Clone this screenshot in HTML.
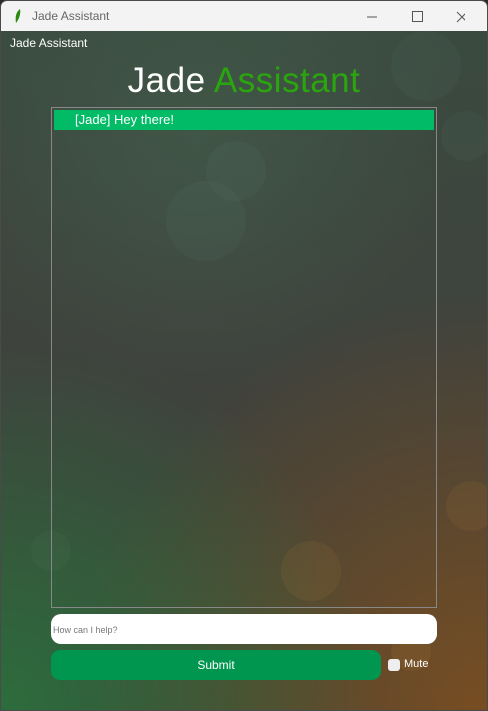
<!DOCTYPE html>
<html><head><style>
*{margin:0;padding:0;box-sizing:border-box}
body{width:488px;height:711px;overflow:hidden;background:#2b2b2b;font-family:"Liberation Sans",sans-serif}
.win{position:absolute;left:0;top:0;width:488px;height:711px;border-radius:7px 7px 0 0;overflow:hidden;border:1px solid #4a4a4a}
.tb{height:30px;background:#f3f3f3;position:relative;font-size:12px;color:#666}
.tb .t{position:absolute;left:31px;top:8px}
.app{position:absolute;top:30px;left:0;right:0;bottom:0;
background:
radial-gradient(circle at 0% 100%,rgba(40,120,60,.8),transparent 45%),
radial-gradient(circle at 100% 100%,rgba(130,80,30,.85),transparent 50%),
radial-gradient(circle at 40% 15%,rgba(70,100,80,.5),transparent 40%),
linear-gradient(#3a4a3f,#3f423d 50%,#3d403a)}
.b{position:absolute;border-radius:50%;background:rgba(120,160,140,.07)}
.lbl{position:absolute;left:9px;top:5px;color:#fff;font-size:12px}
h1{position:absolute;left:0;width:486px;top:30px;text-align:center;font-weight:normal;font-size:35px;color:#fff;letter-spacing:.5px}
h1 span{color:#2aa50e}
.list{position:absolute;left:50px;top:76px;width:386px;height:501px;border:1px solid #888}
.row{position:absolute;left:2px;top:2px;right:2px;height:20px;background:#02bb67;color:#fff;font-size:13px;padding:2px 0 0 21px}
.inp{position:absolute;left:50px;top:583px;width:386px;height:30px;background:#fff;border-radius:10px;font-size:9px;color:#777;padding:11px 2px}
.btn{position:absolute;left:50px;top:619px;width:330px;height:30px;background:#009650;border-radius:9px;color:#fff;font-size:12px;text-align:center;line-height:30px}
.cb{position:absolute;left:387px;top:628px;width:12px;height:12px;background:#eee;border-radius:3px}
.mute{position:absolute;left:403px;top:627px;color:#fff;font-size:11px}
</style></head><body>
<div class="win">
<div class="tb"><svg style="position:absolute;left:13px;top:7px" width="8" height="16"><path d="M6 1 C2 4 1 9 2 15 C5 11 7 6 6 1Z" fill="#2a8a10"/></svg><span class="t">Jade Assistant</span>
<svg style="position:absolute;left:364px;top:9px" width="100" height="14" stroke="#555" fill="none"><path d="M2 7h10"/><rect x="47.5" y="1.5" width="10" height="10"/><path d="M92 2l10 10M102 2l-10 10"/></svg></div>
<div class="app">
<div class="b" style="left:205px;top:110px;width:60px;height:60px"></div>
<div class="b" style="left:165px;top:150px;width:80px;height:80px"></div>
<div class="b" style="left:390px;top:0;width:70px;height:70px"></div>
<div class="b" style="left:440px;top:80px;width:50px;height:50px"></div>
<div class="b" style="left:30px;top:500px;width:40px;height:40px"></div>
<div class="b" style="left:280px;top:510px;width:60px;height:60px;background:rgba(200,140,60,.1)"></div>
<div class="b" style="left:390px;top:600px;width:40px;height:40px;background:rgba(200,140,60,.12)"></div>
<div class="b" style="left:445px;top:450px;width:50px;height:50px;background:rgba(200,140,60,.1)"></div>
<div class="lbl">Jade Assistant</div>
<h1>Jade <span>Assistant</span></h1>
<div class="list"><div class="row">[Jade] Hey there!</div></div>
<div class="inp">How can I help?</div>
<div class="btn">Submit</div>
<div class="cb"></div><div class="mute">Mute</div>
</div></div>
</body></html>
